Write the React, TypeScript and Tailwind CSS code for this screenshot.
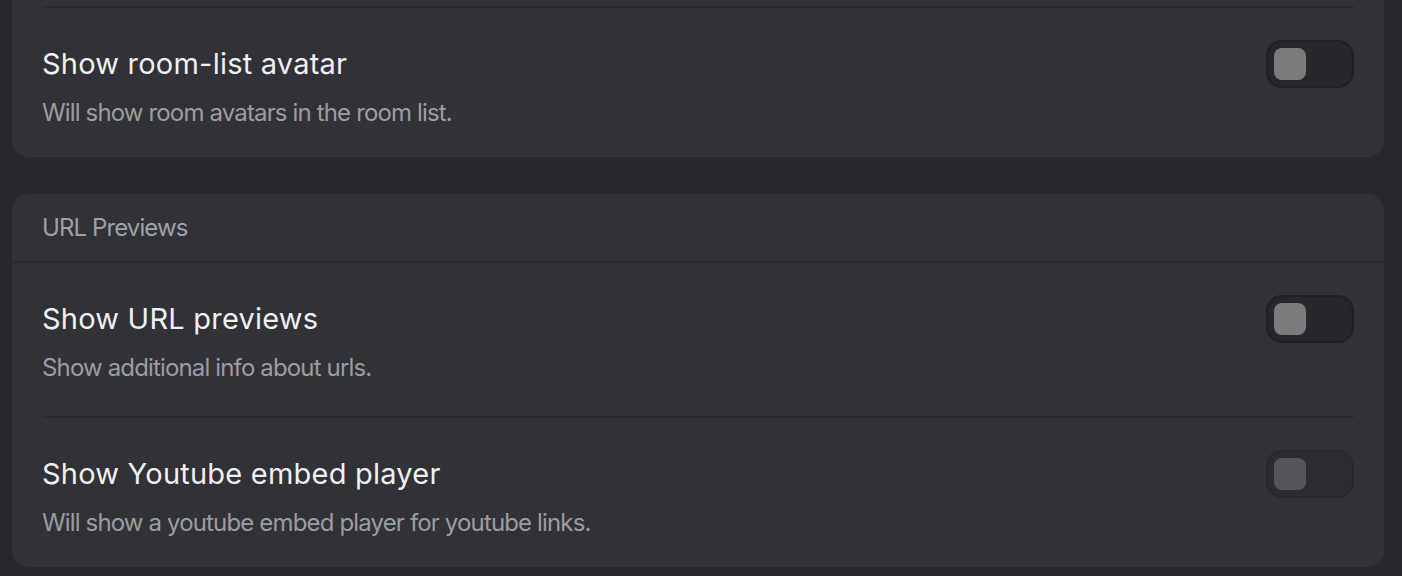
import React from "react";

function Toggle({ disabled }: { disabled?: boolean }) {
  return (
    <div
      className={
        "flex h-[48px] w-[88px] shrink-0 items-center rounded-[16px] border-2 border-[#1f2023] bg-[#26272b] p-[6px] " +
        (disabled ? "opacity-50" : "")
      }
    >
      <div className="h-[32px] w-[32px] rounded-[8px] bg-[#7b7b7d]" />
    </div>
  );
}

function Row({
  title,
  desc,
  last,
  disabled,
}: {
  title: string;
  desc: string;
  last?: boolean;
  disabled?: boolean;
}) {
  return (
    <div className={"flex items-start justify-between px-[30px] pt-[32px] " + (last ? "pb-[28px]" : "pb-[32px]")}>
      <div className="flex flex-col">
        <div className="flex h-[48px] items-center text-[29px] leading-[48px] tracking-[0.22px] text-[#f0f0f1]">
          {title}
        </div>
        <div className="mt-[9px] text-[24px] leading-[32px] tracking-[-0.85px] text-[#9c9da1]">{desc}</div>
      </div>
      <Toggle disabled={disabled} />
    </div>
  );
}

function Sep() {
  return <div className="mx-[30px] h-[2px] bg-[#28292d]" />;
}

export default function App() {
  return (
    <div
      className="h-[576px] w-full overflow-hidden bg-[#27282c]"
      style={{ fontFamily: "Inter, 'Noto Sans', sans-serif" }}
    >
      <div className="flex flex-col gap-[37px] pl-[12px] pr-[18px]">
        <div className="-mt-[40px] flex flex-col rounded-[16px] bg-[#303237]">
          <div className="h-[46px]" />
          <Sep />
          <Row title="Show room-list avatar" desc="Will show room avatars in the room list." last />
        </div>
        <div className="flex flex-col rounded-[16px] bg-[#303237]">
          <div className="flex h-[69px] items-center border-b-2 border-[#28292d] px-[30px] text-[24px] tracking-[-0.9px] text-[#a0a1a5]">
            URL Previews
          </div>
          <Row title="Show URL previews" desc="Show additional info about urls." />
          <Sep />
          <Row
            title="Show Youtube embed player"
            desc="Will show a youtube embed player for youtube links."
            last
            disabled
          />
        </div>
      </div>
    </div>
  );
}
